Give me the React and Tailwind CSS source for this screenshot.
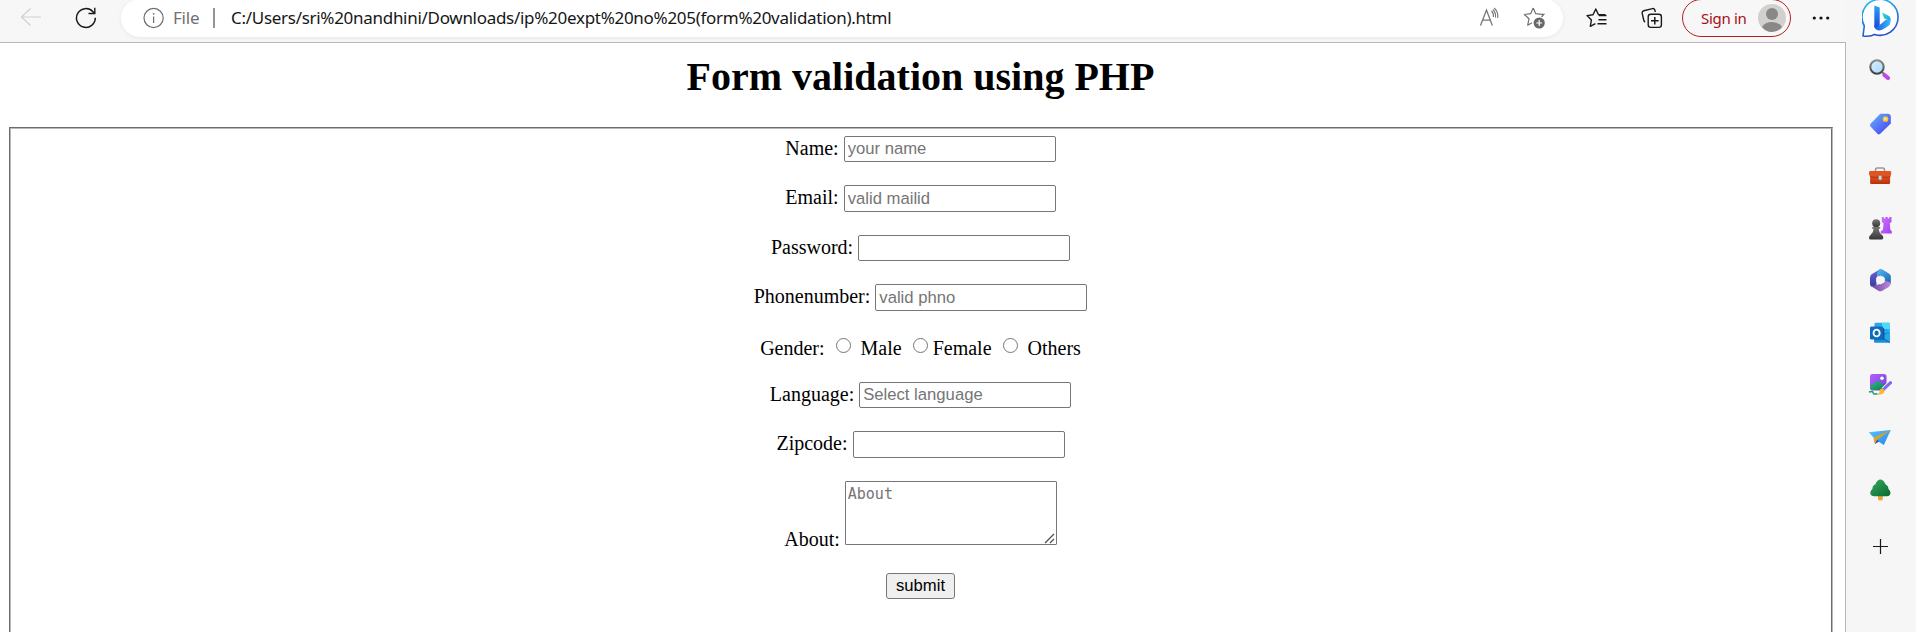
import React from "react";

const Svg = ({ className, children, viewBox = "0 0 24 24" }) => (
  <svg className={`block shrink-0 ${className}`} viewBox={viewBox} fill="none">
    {children}
  </svg>
);

const star = "M10.2 1 L12.7 6.7 L19 7.4 M10.2 1 L7.6 6.7 L1.3 7.5 L6 11.8 L4.7 18.2 L9 15.8";

function Toolbar() {
  return (
    <header className="flex h-[42px] items-start bg-[#f7f7f7] font-['Noto_Sans',sans-serif]">
      <Svg className="ml-[20px] mt-[7px] h-[20px] w-[22px]" viewBox="0 0 22 20">
        <path d="M10.5 1.5 L1.5 10 L10.5 18.5 M1.5 10 H21" stroke="#d0d0d0" strokeWidth="1.2" />
      </Svg>
      <Svg className="ml-[33px] mt-[7px] h-[22px] w-[22px]" viewBox="0 0 22 22">
        <path d="M20.3 10.8 A9.4 9.4 0 1 1 17.8 4.6 L19.8 6.4" stroke="#1a1a1a" strokeWidth="1.5" />
        <path d="M19.8 0.8 V6.5 H13.5" stroke="#1a1a1a" strokeWidth="1.4" />
      </Svg>
      <div className="-mt-px ml-[24px] flex h-[38px] w-[1442px] shrink-0 items-start rounded-full bg-white shadow-[0_1px_4px_rgba(0,0,0,0.07)]">
        <Svg className="ml-[22px] mt-[8px] h-[22px] w-[22px]" viewBox="0 0 22 22">
          <circle cx="10.6" cy="11" r="9.6" stroke="#6e6e6e" strokeWidth="1.2" />
          <path d="M10.6 9.6 V16" stroke="#6e6e6e" strokeWidth="1.2" />
          <circle cx="10.6" cy="6.8" r="0.9" fill="#6e6e6e" />
        </Svg>
        <span className="ml-[8px] mt-[6px] w-[28px] whitespace-nowrap text-[17px] leading-[26px] tracking-[-0.2px] text-[#707070]">File</span>
        <div className="ml-[12px] mt-[9px] h-[20px] w-[2px] bg-[#949494]" />
        <span className="ml-[16px] mt-[6px] w-[1230px] whitespace-nowrap text-[17px] leading-[26px] tracking-[-0.29px] text-[#161616]">
          C:/Users/sri%20nandhini/Downloads/ip%20expt%20no%205(form%20validation).html
        </span>
        <Svg className="ml-[18px] mt-[8px] h-[20px] w-[22px]" viewBox="0 0 22 20">
          <path d="M1.5 18.5 L7.5 3 L13.3 18.5 M3.6 13.2 H11.2" stroke="#767676" strokeWidth="1.3" />
          <path d="M12.5 4 Q15 6.5 14.4 10 M13.8 2.5 Q17.2 6 16.5 10.5 M15.2 1 Q19.8 5.5 18.7 11" stroke="#767676" strokeWidth="1.1" />
        </Svg>
        <Svg className="ml-[22px] mt-[8px] h-[23px] w-[24px]" viewBox="0 0 24 23">
          <path d={star} stroke="#707070" strokeWidth="1.2" strokeLinejoin="round" />
          <path d="M19 7.4 H20.8 L18.5 10" stroke="#707070" strokeWidth="1.2" />
          <circle cx="16.2" cy="16" r="5.6" fill="#686868" />
          <path d="M16.2 13 V19 M13.2 16 H19.2" stroke="white" strokeWidth="1.2" />
        </Svg>
      </div>
      <Svg className="ml-[22px] mt-[7px] h-[22px] w-[24px]" viewBox="0 0 24 22">
        <path d="M20.6 7.8 H13.5 L10.8 2 L8 7.8 L2 8.6 L6.4 13 L5.3 19.3 L10.4 16.6 M13.5 12.8 H21.5 M12.5 16.8 H21.5 M14 8.6 H21.5" stroke="#1a1a1a" strokeWidth="1.4" strokeLinejoin="round" />
      </Svg>
      <Svg className="ml-[32px] mt-[7px] h-[22px] w-[23px]" viewBox="0 0 23 22">
        <path d="M4.2 15 Q3 14.5 2.7 13 L1.2 6.4 Q0.8 4.3 2.8 3.8 L11.5 1.6 Q13.2 1.2 13.8 3 L14.4 5" stroke="#1a1a1a" strokeWidth="1.4" />
        <rect x="7.2" y="7.2" width="13.2" height="13.2" rx="2.6" stroke="#1a1a1a" strokeWidth="1.4" />
        <path d="M13.8 10 V17.6 M10 13.8 H17.6" stroke="#1a1a1a" strokeWidth="1.5" />
      </Svg>
      <div className="-mt-px ml-[18px] flex h-[38px] w-[109px] shrink-0 items-center rounded-full border border-[#b42025]">
        <span className="ml-[18px] w-[46px] whitespace-nowrap text-[15px] leading-[26px] tracking-[-0.3px] text-[#a80f14]">Sign in</span>
        <Svg className="ml-[11px] h-[28px] w-[28px]" viewBox="0 0 28 28">
          <circle cx="14" cy="14" r="14" fill="#d2d0ce" />
          <circle cx="14" cy="10" r="6" fill="#8a8886" />
          <path d="M4 23 Q7 18 14 18 Q21 18 24 23 Q20 28 14 28 Q8 28 4 23Z" fill="#8a8886" />
        </Svg>
      </div>
      <Svg className="ml-[21px] mt-[15px] h-[6px] w-[18px]" viewBox="0 0 18 6">
        <circle cx="2.3" cy="3" r="1.6" fill="#111" />
        <circle cx="9" cy="3" r="1.6" fill="#111" />
        <circle cx="15.7" cy="3" r="1.6" fill="#111" />
      </Svg>
    </header>
  );
}

const box =
  "block w-[212px] shrink-0 rounded-[2px] border border-[#767676] bg-white px-[3px] font-['Liberation_Sans',Arial,sans-serif] text-[16.67px] leading-[22px] placeholder-[#757575] outline-none";
const rowBase = "flex items-start justify-center gap-[5px] leading-[22px]";

function Field({ label, row, field, ...rest }) {
  return (
    <label className={`${rowBase} ${row}`}>
      <span className="pt-px">{label}</span>
      <input className={`${box} ${field}`} {...rest} />
    </label>
  );
}

function Radio({ className }) {
  return (
    <input
      type="radio"
      name="gender"
      className={`mt-px block size-[15px] shrink-0 appearance-none rounded-full border border-[#767676] bg-white ${className}`}
    />
  );
}

function FormPage() {
  return (
    <main className="flex h-[590px] flex-col overflow-hidden border-t border-r border-[#b8b8b8] bg-white pl-[9px] pr-[12px] font-['Liberation_Serif','Times_New_Roman',serif] text-[20px] text-black">
      <h1 className="mt-[11px] h-[46px] pr-[1px] text-center text-[40px] leading-[46px] font-bold">Form validation using PHP</h1>
      <div className="mt-[27px] flex-1 border-t border-l border-r border-t-[#6c6c6c] border-l-[#6c6c6c] border-r-[#b8b8b8]">
        <form className="h-full border-t border-l border-r border-t-[#b8b8b8] border-l-[#b8b8b8] border-r-[#6c6c6c] pt-[7px] pr-[1px]">
          <Field label="Name:" row="h-[26px]" field="h-[26px]" placeholder="your name" />
          <Field label="Email:" row="mt-[23px] h-[27px]" field="h-[27px]" placeholder="valid mailid" />
          <Field label="Password:" row="mt-[23px] h-[26px]" field="h-[26px]" type="password" />
          <Field label="Phonenumber:" row="mt-[23px] h-[27px]" field="h-[27px]" placeholder="valid phno" />
          <div className="mt-[26px] flex h-[22px] items-start justify-center leading-[22px]">
            <span>Gender:</span>
            <Radio className="ml-[11px]" />
            <span className="ml-[10px]">Male</span>
            <Radio className="ml-[11px]" />
            <span className="ml-[5px]">Female</span>
            <Radio className="ml-[11px]" />
            <span className="ml-[10px]">Others</span>
          </div>
          <Field label="Language:" row="mt-[23px] h-[26px]" field="h-[26px]" placeholder="Select language" />
          <Field label="Zipcode:" row="mt-[23px] h-[27px]" field="h-[27px]" />
          <label className="mt-[23px] flex h-[64px] items-start justify-center gap-[5px] leading-[22px]">
            <span className="mt-[47px]">About:</span>
            <span className="relative block h-[64px]">
              <textarea
                placeholder="About"
                className="block h-[64px] w-[212px] resize-none rounded-[1px] border border-[#767676] bg-white px-[2px] py-[3px] font-['DejaVu_Sans_Mono',monospace] text-[15px] leading-[19px] placeholder-[#757575] outline-none"
              />
              <svg className="absolute right-[2px] bottom-[1px] h-[11px] w-[11px]" viewBox="0 0 11 11" fill="none">
                <path d="M1 10 L10 1 M6 10 L10 6" stroke="#555" strokeWidth="1.4" />
              </svg>
            </span>
          </label>
          <div className="mt-[28px] flex justify-center">
            <button
              type="button"
              className="h-[26px] w-[69px] rounded-[3px] border border-[#767676] bg-[#efefef] font-['Liberation_Sans',Arial,sans-serif] text-[16.67px] leading-[22px] text-black"
            >
              submit
            </button>
          </div>
        </form>
      </div>
    </main>
  );
}

function Gradient({ id, from, to, x2 = "1", y2 = "1" }) {
  return (
    <linearGradient id={id} x1="0" y1="0" x2={x2} y2={y2}>
      <stop stopColor={from} />
      <stop offset="1" stopColor={to} />
    </linearGradient>
  );
}

function Sidebar() {
  const slot = "ml-[22px] h-[24px] w-[24px]";
  return (
    <aside className="flex w-[70px] shrink-0 flex-col bg-[#f6f6f6]">
      <Svg className="ml-[16px] h-[39px] w-[40px]" viewBox="0 0 40 39">
        <defs>
          <Gradient id="ring" from="#20c4f4" to="#2450cc" x2="0.3" />
          <Gradient id="stem" from="#2ba5f5" to="#1745dc" x2="0" />
          <Gradient id="leaf" from="#28e0c0" to="#2196f3" x2="1" />
          <Gradient id="base" from="#1756df" to="#36b9fa" x2="1" y2="0" />
        </defs>
        <path d="M1 36 L2.3 26 A18 18 0 1 1 12.5 34.4 Q9 36.8 1 36Z" fill="white" stroke="url(#ring)" strokeWidth="1.6" strokeLinejoin="round" />
        <path d="M12.3 5.5 L17.7 7.4 V25 L14 28.5 L12.3 27Z" fill="url(#stem)" />
        <path d="M20 12.5 L27 16 Q29.5 18 28.3 22 Q27 19.5 22.3 18.5Z" fill="url(#leaf)" />
        <path d="M12.3 25.5 Q14 28 17.7 25 L24.5 19.3 Q29.5 20 28 24 Q27 26 19.5 30 Q14.5 31.5 12.3 27Z" fill="url(#base)" />
      </Svg>
      <Svg className={`${slot} mt-[19px]`}>
        <defs>
          <Gradient id="lens" from="#d6efff" to="#a8d8fa" />
          <Gradient id="rim" from="#8b8b8b" to="#404040" x2="0" />
        </defs>
        <path d="M16.5 17 L20 20" stroke="#c444ed" strokeWidth="4.2" strokeLinecap="round" />
        <path d="M13 13 L16 16" stroke="#777" strokeWidth="2" />
        <circle cx="9" cy="9" r="6.7" fill="url(#lens)" stroke="url(#rim)" strokeWidth="2" />
      </Svg>
      <Svg className={`${slot} mt-[30px]`}>
        <defs><Gradient id="tag" from="#66b7fa" to="#4638f3" /></defs>
        <path d="M12.3 1.8 H19.5 Q22.8 1.8 22.8 4.6 V11.5 L12 22 Q10.8 23 9.4 21.8 L2.5 14.4 Q1.3 13 2.5 11.7Z" fill="url(#tag)" />
        <circle cx="17.5" cy="7" r="2.1" fill="#cce8ff" stroke="#ffc91c" strokeWidth="1.5" />
      </Svg>
      <Svg className={`${slot} mt-[28px]`}>
        <defs><Gradient id="case" from="#ef5d25" to="#b92f0b" x2="0" /></defs>
        <path d="M7.5 7 V5.7 Q7.5 4 9.2 4 H14.8 Q16.5 4 16.5 5.7 V7" stroke="#999" strokeWidth="1.6" />
        <rect x="2.1" y="10" width="20" height="10" rx="1.2" fill="url(#case)" />
        <path d="M2.3 7 H22 Q23.5 7 23.3 9 Q23 13 20.5 13 H4 Q1.1 13 1 9 Q.8 7 2.3 7Z" fill="#e2541f" />
        <path d="M2 12 Q2.8 13.2 4 13.2 H20.5 Q22 13 22.5 12" stroke="#9c2c08" strokeWidth="0.8" />
        <rect x="10.5" y="11.4" width="3.4" height="4.6" rx="1.5" fill="#d5d5d5" stroke="#888" strokeWidth="0.6" />
      </Svg>
      <Svg className={`${slot} mt-[28px]`}>
        <defs>
          <Gradient id="rook" from="#cb73fb" to="#a63ff2" />
          <Gradient id="pawn" from="#777" to="#363636" x2="0" />
        </defs>
        <path d="M13.8 1 H15.8 V2.5 H17.3 V1 H19.8 V2.5 H21.3 V1 H23.5 V6 L21.8 7.3 L22.3 13.5 L23.8 15.5 V17.5 H12.7 V15.5 L15 13.5 L15.5 7.3 L13.8 6Z" fill="url(#rook)" />
        <circle cx="8.2" cy="7.3" r="4" fill="url(#pawn)" />
        <path d="M4.2 11 H12.2 V12.7 H10.8 Q10.8 16.5 14 19 Q15.5 20 15.3 22 Q15 23.5 13.5 23.5 H2.5 Q1 23.5 1 22 Q1 20 2.5 19 Q5.6 16.5 5.6 12.7 H4.2Z" fill="url(#pawn)" />
      </Svg>
      <Svg className={`${slot} mt-[28px]`}>
        <defs>
          <Gradient id="m1" from="#755cdb" to="#353f9f" x2="0" />
          <Gradient id="m2" from="#56bcf1" to="#1860b4" />
          <Gradient id="m3" from="#684aa2" to="#c388dd" x2="1" y2="0" />
        </defs>
        <path d="M12.5 1 L3.7 6.2 Q2 7.5 2 10 V16 Q2 18.4 4 18.8 Q6.5 19 8.5 17 V10 Q8.5 8.5 10 7.7 L15 4.8Z" fill="url(#m1)" />
        <path d="M9 5 L11 1.5 Q12.6 .5 14.4 1.4 L20.8 5.4 Q22.8 6.5 22.8 8.4 V16 L16.5 14 V11 Q16.5 9.4 15.2 8.6 L9 8.3Z" fill="url(#m2)" />
        <path d="M4 18.7 L8 17.2 L15.6 14.8 Q16.5 13.9 16.5 12.4 L22.8 14.8 Q22.8 18 20.8 19 L14.3 22.7 Q12.3 23.8 10.3 22.7Z" fill="url(#m3)" />
        <path d="M12.4 8 L16.3 10.1 V13.9 L12.4 16.1 L8.5 13.9 V10.1Z" fill="#f6f6f6" stroke="#f6f6f6" strokeWidth="0.6" strokeLinejoin="round" />
      </Svg>
      <Svg className={`${slot} mt-[29px]`}>
        <rect x="6.5" y="1.7" width="15.3" height="12" rx="1.2" fill="#28a8ea" />
        <path d="M14 1.7 H20.6 Q21.8 1.7 21.8 2.9 V8 H14Z" fill="#50d9ff" />
        <path d="M6 9 H14 V16 H6Z" fill="#0364b8" />
        <path d="M6 14 L22 11 V20.6 Q22 21.8 20.8 21.8 H7.2 Q6 21.8 6 20.6Z" fill="#1490df" />
        <path d="M13 16.5 L22 11 V20.8Z" fill="#28a8ea" />
        <path d="M13.5 16.5 L22 21.6" stroke="#0a61ae" strokeWidth=".8" />
        <path d="M8 7 H15 Q16.3 7 16.3 8.2 V18.6 H7Z" fill="#0a4f94" />
        <rect x="2" y="5.5" width="13.2" height="13.1" rx="1.3" fill="#0f6cbd" />
        <ellipse cx="8.6" cy="12" rx="3.1" ry="3.4" stroke="white" strokeWidth="1.8" />
      </Svg>
      <Svg className={`${slot} mt-[28px]`}>
        <defs>
          <Gradient id="photo" from="#b95bfb" to="#6848db" />
          <Gradient id="hill" from="#33b978" to="#087d60" />
        </defs>
        <rect x="2" y="1" width="16.5" height="16.5" rx="2.5" fill="url(#photo)" />
        <circle cx="14" cy="5.3" r="1.8" fill="white" />
        <path d="M2 13.2 L7.8 9 Q10 7.5 12 9 L17.5 13.5 Q16.5 17 14 17 H4.5 Q2 17 2 13.2Z" fill="url(#hill)" />
        <path d="M15.4 16.5 L22.6 9.7" stroke="#f6f6f6" strokeWidth="4.6" />
        <path d="M15.4 16.5 L22.6 9.7" stroke="#8364ee" strokeWidth="3" strokeLinecap="round" />
        <path d="M12.2 16.2 Q14.5 14.5 16.2 17 Q17.5 21.5 9.2 22 Q11.6 20 12.2 16.2Z" fill="#f8b82d" />
        <path d="M1 19 Q5 17.6 5 19.5 Q5 21.7 9.5 20.8" stroke="#23966d" strokeWidth="1.5" />
      </Svg>
      <Svg className={`${slot} mt-[29px]`}>
        <defs>
          <Gradient id="wing" from="#58c4fb" to="#2487ee" />
          <Gradient id="fold" from="#f4b42d" to="#d08114" />
        </defs>
        <path d="M.8 6.3 L22.8 4.1 L15.8 19 L10.4 15.5 L7 17.7 L6 12Z" fill="url(#wing)" />
        <path d="M5.3 11.8 L22.8 4.1 L9.2 13.7 L7.3 18 L6.7 17Z" fill="url(#fold)" />
        <path d="M7 18 L9.2 13.7 L11.2 15.2Z" fill="#1557ad" />
      </Svg>
      <Svg className={`${slot} mt-[28px]`}>
        <defs><Gradient id="tree" from="#39a961" to="#08692f" /></defs>
        <path d="M10 17 H14.9 V21 Q14.9 22.6 12.4 22.6 Q10 22.6 10 21Z" fill="#f3a331" />
        <path d="M9.6 2.7 Q12.4 .2 15.2 2.7 Q16.6 4 17.4 6.2 Q20.5 7.8 20.4 10.7 Q23.7 14.3 21.7 17 Q20.8 18.3 18.9 18.3 H5.9 Q3.4 18.3 2.5 16.3 Q1.5 13.8 4.4 10.7 Q4.4 7.6 7.4 6.2 Q8.1 4 9.6 2.7Z" fill="url(#tree)" />
      </Svg>
      <Svg className="ml-[27px] mt-[37px] h-[16px] w-[16px]" viewBox="0 0 16 16">
        <path d="M0 7.5 H15 M7.5 0 V15" stroke="#1a1a1a" strokeWidth="1.2" />
      </Svg>
    </aside>
  );
}

export default function App() {
  return (
    <div className="flex h-[632px] w-[1916px] overflow-hidden bg-[#f7f7f7]">
      <div className="w-[1846px] shrink-0">
        <Toolbar />
        <FormPage />
      </div>
      <Sidebar />
    </div>
  );
}
